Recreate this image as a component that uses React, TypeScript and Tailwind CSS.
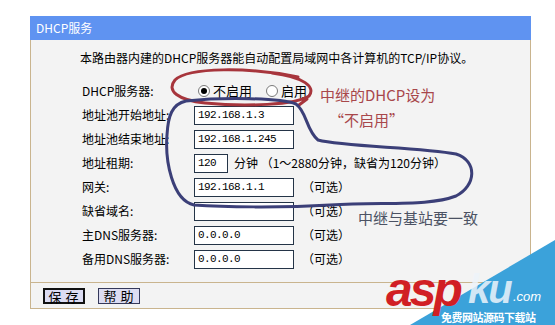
import React from 'react';

const cjk = "font-['Noto_Sans_CJK_SC','Noto_Sans',sans-serif]";
const mono = "font-['Liberation_Mono','DejaVu_Sans_Mono',monospace]";

type Row = { label: string; value?: string; width?: string; note?: string };

const rows: Row[] = [
  { label: '地址池开始地址:', value: '192.168.1.3' },
  { label: '地址池结束地址:', value: '192.168.1.245' },
  { label: '地址租期:', value: '120', width: 'w-[34px]', note: '分钟 （1～2880分钟，缺省为120分钟）' },
  { label: '网关:', value: '192.168.1.1', note: '（可选）' },
  { label: '缺省域名:', value: '', note: '（可选）' },
  { label: '主DNS服务器:', value: '0.0.0.0', note: '（可选）' },
  { label: '备用DNS服务器:', value: '0.0.0.0', note: '（可选）' },
];

const Radio = ({ checked }: { checked?: boolean }) => (
  <span className="w-[12px] h-[12px] rounded-full border border-[#7a7a7a] bg-white flex items-center justify-center">
    {checked && <span className="w-[6px] h-[6px] rounded-full bg-black" />}
  </span>
);

const Field = ({ value, width }: { value?: string; width?: string }) => (
  <div className={`${width ?? 'w-[100px]'} h-[19px] border border-[#243447] bg-white flex items-center pl-[3px] ${mono} text-[11px] tracking-[-0.6px] text-black`}>
    {value}
  </div>
);

const Overlay = () => (
  <svg className="absolute inset-0 pointer-events-none" width="555" height="325" viewBox="0 0 555 325">
    {/* red loop round the radio buttons */}
    <path
      d="M298 77 C250 67 188 67 175 80 C166 91 178 100 205 103 C245 107 296 105 309 96 C316 87 304 77 272 73 M299 105 L307 99"
      fill="none" stroke="#a7353c" strokeWidth="3" strokeLinecap="round"
    />
    {/* blue loop round the address fields */}
    <path
      d="M186 101 C225 97 280 98 296 104 C307 112 306 130 318 140 C345 147 420 147 456 154 C478 161 476 186 456 196 C430 206 390 202 330 205 C280 208 222 207 194 205 C172 200 165 160 167 135 C168 116 172 104 186 101 Z"
      fill="none" stroke="#3b3f78" strokeWidth="3" strokeLinejoin="round"
    />
  </svg>
);

const Watermark = () => (
  <svg className="absolute inset-0 pointer-events-none" width="555" height="325" viewBox="0 0 555 325">
    <polygon points="410,325 555,240 555,325" fill="#3ba2da" />
    <text x="386" y="306" fontFamily="'Liberation Sans', sans-serif" fontWeight="900" fontStyle="italic" fontSize="48" fill="#d11f24" letterSpacing="-3">asp</text>
    <text x="468" y="303" fontFamily="'Liberation Sans', sans-serif" fontWeight="900" fontStyle="italic" fontSize="40" fill="#eef4fa" fillOpacity="0.85" letterSpacing="-2">ku</text>
    <text x="513" y="301" fontFamily="'Liberation Sans', sans-serif" fontStyle="italic" fontSize="13" fill="#ffffff">.com</text>
    <text x="441" y="322" fontFamily="'Noto Sans CJK SC', sans-serif" fontWeight="700" fontSize="11" fill="#ffffff" letterSpacing="-0.5">免费网站源码下载站</text>
  </svg>
);

export default function App() {
  return (
    <div className={`relative w-[555px] h-[325px] bg-white overflow-hidden ${cjk}`}>
      <div className="ml-[30px] mt-[16px] w-[501px] flex flex-col">
        <div className="h-[24px] bg-[#5f93f1] text-white text-[12px] pl-[6px] flex items-center">DHCP服务</div>
        <div className="bg-[#f3f3f3] border-x border-b border-[#c9b48e] flex flex-col">
          <div className="pt-[10px] pl-[49px] h-[39px] text-[12px] leading-[16px] text-black">
            本路由器内建的DHCP服务器能自动配置局域网中各计算机的TCP/IP协议。
          </div>
          <div className="pl-[51px] pb-[11px] flex flex-col text-[12px] text-black">
            <div className="h-[24px] flex items-center">
              <span className="w-[116px]">DHCP服务器:</span>
              <div className="flex items-center gap-[3px] text-[13px]">
                <Radio checked />
                <span>不启用</span>
                <span className="w-[8px]" />
                <Radio />
                <span>启用</span>
              </div>
            </div>
            {rows.map((r) => (
              <div key={r.label} className="h-[24px] flex items-center">
                <span className="w-[112px]">{r.label}</span>
                <Field value={r.value} width={r.width} />
                {r.note && <span className={r.width ? 'ml-[6px]' : 'ml-[8px]'}>{r.note}</span>}
              </div>
            ))}
          </div>
          <div className="border-t border-[#c9b48e] h-[26px] flex items-center gap-[13px] pl-[12px]">
            <button className="w-[42px] h-[16px] bg-[#dcdcf2] border-2 border-[#111] text-[13px] leading-none tracking-[4px] pl-[3px] text-black">保存</button>
            <button className="w-[42px] h-[16px] bg-[#dcdcf2] border border-[#34385a] text-[13px] leading-none tracking-[4px] pl-[3px] text-black">帮助</button>
          </div>
        </div>
      </div>

      <Overlay />

      <div className="absolute left-[320px] top-[85px] text-[15px] leading-[20px] text-[#a8474b]">中继的DHCP设为</div>
      <div className="absolute left-[329px] top-[110px] text-[15px] leading-[20px] text-[#a8474b]">“不启用”</div>
      <div className="absolute left-[358px] top-[208px] text-[15px] leading-[20px] text-[#4b5263]">中继与基站要一致</div>

      <Watermark />
    </div>
  );
}
